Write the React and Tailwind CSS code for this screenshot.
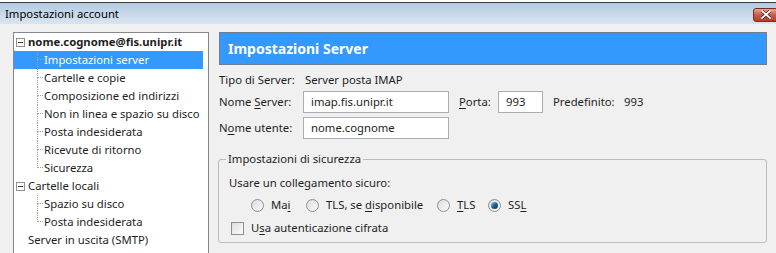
import React from "react";

const font = { fontFamily: '"Noto Sans", "Open Sans", sans-serif' };

function Box() {
  return (
    <div className="w-[9px] h-[9px] border border-[#919191] bg-white flex items-center justify-center">
      <div className="w-[5px] h-px bg-[#3c3c3c]" />
    </div>
  );
}

function Connector({ last }) {
  return (
    <div className="ml-[23px] w-[6px] h-[18px] flex flex-col shrink-0">
      <div className="h-[9px] border-l border-b border-dotted border-[#a0a0a0]" />
      <div className={"h-[9px] border-l border-dotted " + (last ? "border-transparent" : "border-[#a0a0a0]")} />
    </div>
  );
}

function Child({ label, selected, last }) {
  return (
    <div className={"h-[18px] flex items-center mr-[5px] " + (selected ? "bg-[#3399ff] text-white" : "text-[#1e1e1e]")}>
      <Connector last={last} />
      <span className="ml-[1px] leading-none whitespace-nowrap">{label}</span>
    </div>
  );
}

function Top({ label, bold, box }) {
  return (
    <div className="h-[18px] flex items-center text-[#1e1e1e]">
      <div className="w-[12px] ml-[2px] flex items-center">{box ? <Box /> : null}</div>
      <span className={"leading-none whitespace-nowrap " + (bold ? "font-bold" : "")}>{label}</span>
    </div>
  );
}

function Radio({ checked }) {
  return (
    <div className="w-[13px] h-[13px] rounded-full border border-[#8e8f8f] bg-gradient-to-br from-[#dcdcdc] to-[#fbfbfb] flex items-center justify-center shrink-0">
      {checked ? (
        <div className="w-[7px] h-[7px] rounded-full bg-gradient-to-br from-[#8fd0f5] via-[#1a5f95] to-[#0c3a66]" />
      ) : null}
    </div>
  );
}

function U({ children }) {
  return <span className="underline underline-offset-2">{children}</span>;
}

function Input({ value, w }) {
  return (
    <div className={"h-[22px] border border-[#abadb3] bg-white flex items-center pl-[7px] " + w}>
      <span className="leading-none">{value}</span>
    </div>
  );
}

export default function App() {
  return (
    <div className="w-[776px] h-[253px] overflow-hidden bg-[#f0f0f0] text-[11.3px] text-[#1e1e1e]" style={font}>
      <div className="h-[3px] bg-white border-b border-[#3a3a3a]" />
      <div className="h-[21px] bg-gradient-to-b from-[#b4cbe2] to-[#d9e5f1] flex items-center justify-between pl-[5px]">
        <span className="text-[11.3px] text-black leading-none">Impostazioni account</span>
        <div className="w-[26px] h-[14px] mt-[2px] -mr-[3px] rounded-[3px] border border-[#7a2a22] bg-gradient-to-b from-[#e8a493] via-[#c75c47] to-[#b83d2a] flex items-center justify-center">
          <svg width="10" height="9" viewBox="0 0 10 9">
            <path d="M1 1 L9 8 M9 1 L1 8" stroke="#4a1a14" strokeWidth="3.2" strokeLinecap="square" />
            <path d="M1 1 L9 8 M9 1 L1 8" stroke="#ffffff" strokeWidth="1.8" strokeLinecap="square" />
          </svg>
        </div>
      </div>
      <div className="flex pt-[8px]">
        <div className="ml-[13px] w-[196px] h-[240px] border border-[#828790] bg-white flex flex-col">
          <Top label="nome.cognome@fis.unipr.it" bold box />
          <Child label="Impostazioni server" selected />
          <Child label="Cartelle e copie" />
          <Child label="Composizione ed indirizzi" />
          <Child label="Non in linea e spazio su disco" />
          <Child label="Posta indesiderata" />
          <Child label="Ricevute di ritorno" />
          <Child label="Sicurezza" last />
          <Top label="Cartelle locali" box />
          <Child label="Spazio su disco" />
          <Child label="Posta indesiderata" last />
          <Top label="Server in uscita (SMTP)" />
        </div>
        <div className="ml-[10px] w-[548px] flex flex-col">
          <div className="h-[33px] border border-[#6f7f90] bg-[#3399ff] flex items-center pl-[8px]">
            <span className="text-white font-bold text-[14px] leading-none">Impostazioni Server</span>
          </div>
          <div className="mt-[6px] h-[18px] flex items-center">
            <span className="w-[86px]">Tipo di Server:</span>
            <span>Server posta IMAP</span>
          </div>
          <div className="mt-[2px] flex items-center">
            <span className="w-[84px]">Nome <U>S</U>erver:</span>
            <Input value="imap.fis.unipr.it" w="w-[146px]" />
            <span className="ml-[10px] w-[39px]"><U>P</U>orta:</span>
            <Input value="993" w="w-[45px]" />
            <span className="ml-[10px] w-[71px]">Predefinito:</span>
            <span>993</span>
          </div>
          <div className="mt-[4px] flex items-center">
            <span className="w-[84px]">N<U>o</U>me utente:</span>
            <Input value="nome.cognome" w="w-[146px]" />
          </div>
          <fieldset className="mt-[13px] -ml-px h-[91px] border border-[#bcbcbc] rounded-[3px] pl-[10px]">
            <legend className="ml-[-3px] px-[2px] leading-[14px]">Impostazioni di sicurezza</legend>
            <div className="mt-[9px] h-[16px] flex items-center">Usare un collegamento sicuro:</div>
            <div className="mt-[5px] h-[18px] flex items-center">
              <div className="ml-[22px]"><Radio /></div>
              <span className="ml-[7px] w-[35px]">Ma<U>i</U></span>
              <div><Radio /></div>
              <span className="ml-[7px] w-[111px]">TLS, se <U>d</U>isponibile</span>
              <div><Radio /></div>
              <span className="ml-[7px] w-[31px]"><U>T</U>LS</span>
              <div><Radio checked /></div>
              <span className="ml-[7px]">SS<U>L</U></span>
            </div>
            <div className="mt-[5px] h-[18px] flex items-center">
              <div className="ml-[2px] w-[13px] h-[13px] border border-[#8f8f8f] bg-gradient-to-br from-[#dedede] to-[#fbfbfb]" />
              <span className="ml-[7px]">U<U>s</U>a autenticazione cifrata</span>
            </div>
          </fieldset>
        </div>
      </div>
    </div>
  );
}
